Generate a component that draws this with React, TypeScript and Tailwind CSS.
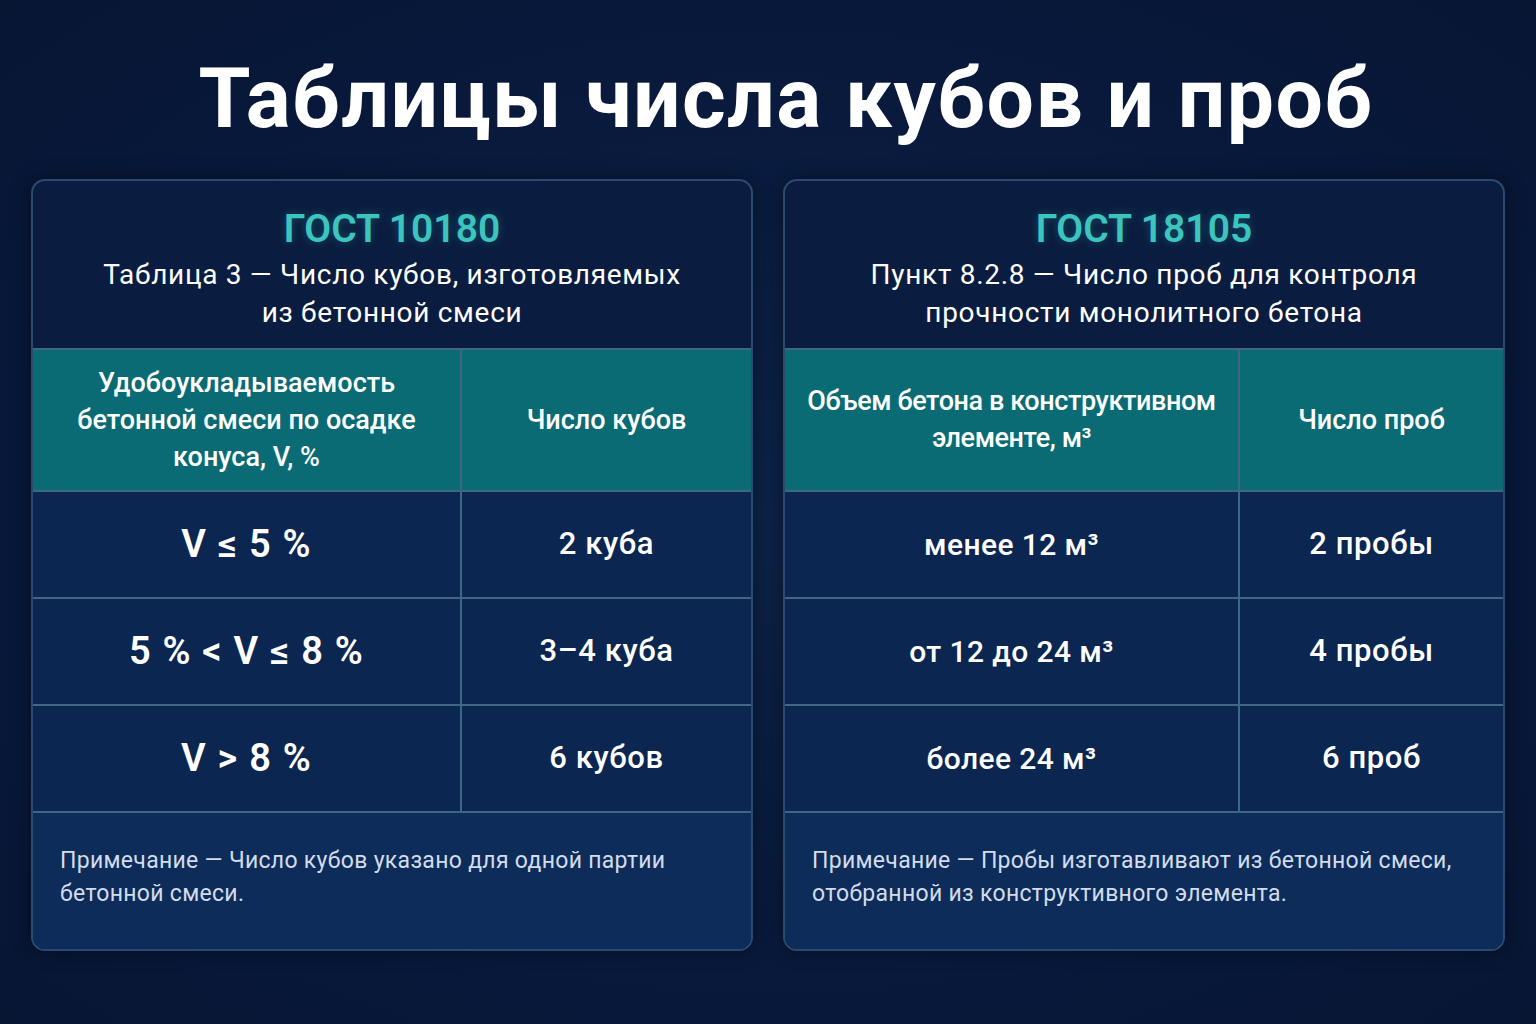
import React from "react";

const font = { fontFamily: 'Roboto, "Noto Sans", "Liberation Sans", sans-serif' };

type Row = [React.ReactNode, React.ReactNode];

function Card({
  gost,
  sub,
  h1,
  h2,
  rows,
  note,
  split,
  bigFirst,
  h1Track,
}: {
  gost: string;
  sub: React.ReactNode;
  h1: React.ReactNode;
  h2: string;
  rows: Row[];
  note: React.ReactNode;
  split: string;
  bigFirst: boolean;
  h1Track: string;
}) {
  return (
    <div className="flex-1 rounded-[14px] border-2 border-[#2c4a70] bg-[#0a1d40] overflow-hidden flex flex-col shadow-[0_0_20px_rgba(0,0,0,0.4)]">
      <div className="h-[167px] flex flex-col items-center pt-[24px]">
        <div className="text-[39px] leading-[48px] font-semibold text-[#3cc4bf] [text-shadow:0_0_8px_rgba(60,196,191,0.3)]">{gost}</div>
        <div className="text-[28px] leading-[38px] tracking-[0.7px] text-white text-center mt-[3px]">{sub}</div>
      </div>
      <div className={`grid ${split} border-t-2 border-[#3f6685]`}>
        <div className={`h-[140px] bg-[#0a6b74] flex items-center justify-center text-center text-[27px] leading-[37px] text-white font-medium border-r-2 border-[#3f6685] px-2 ${h1Track}`}>
          <div>{h1}</div>
        </div>
        <div className="h-[140px] bg-[#0a6b74] flex items-center justify-center text-center text-[27px] text-white font-medium">
          <div>{h2}</div>
        </div>
        {rows.map((r, i) => (
          <React.Fragment key={i}>
            <div className={`h-[107px] bg-[#0b2650] border-t-2 border-r-2 border-[#3f6685] flex items-center justify-center text-white ${bigFirst ? "text-[38px] tracking-[1.2px] font-semibold" : "text-[30px] tracking-[0.4px] font-medium"}`}>
              <div>{r[0]}</div>
            </div>
            <div className="h-[107px] bg-[#0b2650] border-t-2 border-[#3f6685] flex items-center justify-center text-white text-[31px] tracking-[0.6px] font-medium">
              <div>{r[1]}</div>
            </div>
          </React.Fragment>
        ))}
      </div>
      <div className="flex-1 bg-[#0d2c5a] border-t-2 border-[#3f6685] px-[27px] pt-[31px] text-[23px] tracking-[0.3px] leading-[33px] text-[#d3dceb]">{note}</div>
    </div>
  );
}

export default function App() {
  return (
    <div style={font} className="w-[1536px] h-[1024px] bg-[radial-gradient(ellipse_at_center,#0d2348_0%,#08183a_70%,#071633_100%)] flex flex-col items-center">
      <h1 className="text-[84px] leading-none font-bold text-white mt-[57px] ml-[36px] tracking-[1.4px]">Таблицы числа кубов и проб</h1>
      <div className="flex gap-[30px] w-full px-[31px] mt-[38px] h-[772px]">
        <Card
          gost="ГОСТ 10180"
          sub={<>Таблица 3 — Число кубов, изготовляемых<br />из бетонной смеси</>}
          h1={<>Удобоукладываемость<br />бетонной смеси по осадке<br />конуса, V, %</>}
          h1Track=""
          h2="Число кубов"
          split="grid-cols-[429px_1fr]"
          bigFirst
          rows={[
            ["V ≤ 5 %", "2 куба"],
            ["5 % < V ≤ 8 %", "3–4 куба"],
            ["V > 8 %", "6 кубов"],
          ]}
          note={<>Примечание — Число кубов указано для одной партии<br />бетонной смеси.</>}
        />
        <Card
          gost="ГОСТ 18105"
          sub={<>Пункт 8.2.8 — Число проб для контроля<br />прочности монолитного бетона</>}
          h1={<>Объем бетона в конструктивном<br />элементе, м³</>}
          h1Track="tracking-[-0.4px]"
          h2="Число проб"
          split="grid-cols-[455px_1fr]"
          bigFirst={false}
          rows={[
            ["менее 12 м³", "2 пробы"],
            ["от 12 до 24 м³", "4 пробы"],
            ["более 24 м³", "6 проб"],
          ]}
          note={<>Примечание — Пробы изготавливают из бетонной смеси,<br />отобранной из конструктивного элемента.</>}
        />
      </div>
    </div>
  );
}
